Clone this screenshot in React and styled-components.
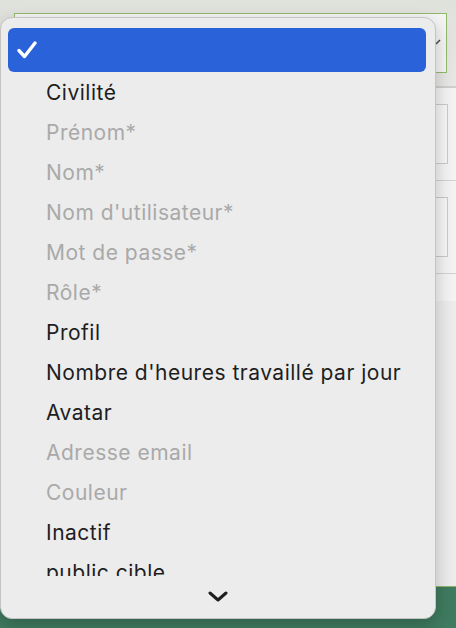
import React from 'react';
import styled, { createGlobalStyle } from 'styled-components';

const GlobalStyle = createGlobalStyle`
  html, body { margin: 0; padding: 0; }
  body {
    font-family: Inter, "Noto Sans", "Liberation Sans", sans-serif;
    background: #e4e5e1;
  }
`;

const items = [
  { label: 'Civilité' },
  { label: 'Prénom*', disabled: true },
  { label: 'Nom*', disabled: true },
  { label: "Nom d'utilisateur*", disabled: true },
  { label: 'Mot de passe*', disabled: true },
  { label: 'Rôle*', disabled: true },
  { label: 'Profil' },
  { label: "Nombre d'heures travaillé par jour" },
  { label: 'Avatar' },
  { label: 'Adresse email', disabled: true },
  { label: 'Couleur', disabled: true },
  { label: 'Inactif' },
  { label: 'public cible' },
];

export default function App() {
  return (
    <>
      <GlobalStyle />
      <Page>
        <Header>
          <SelectField>
            <SelectArrow viewBox="0 0 10 10">
              <polyline points="2,7 6,3" />
            </SelectArrow>
          </SelectField>
        </Header>
        <FormPanel>
          <FormRow><InputBox /></FormRow>
          <FormRow><InputBox /></FormRow>
        </FormPanel>
        <Backdrop />
        <Footer />

        <Menu>
          <MenuList>
            <SelectedItem>
              <CheckIcon viewBox="0 0 20 18">
                <polyline points="2,9.5 7.5,15.5 18,2" />
              </CheckIcon>
            </SelectedItem>
            {items.map((item) => (
              <MenuItem key={item.label} $disabled={item.disabled}>
                {item.label}
              </MenuItem>
            ))}
          </MenuList>
          <ScrollHint>
            <Chevron viewBox="0 0 20 11">
              <polyline points="2,2 10,9 18,2" />
            </Chevron>
          </ScrollHint>
        </Menu>
      </Page>
    </>
  );
}

const Page = styled.div`
  position: relative;
  height: 628px;
  overflow: hidden;
  display: flex;
  flex-direction: column;
`;

const Header = styled.div`
  height: 88px;
  box-sizing: border-box;
  padding: 13px 9px 0 14px;
  background: linear-gradient(#dfe1db, #e7e7e5);
  border-bottom: 2px solid #cfcfcf;
`;

const SelectField = styled.div`
  position: relative;
  height: 60px;
  box-sizing: border-box;
  border: 1px solid #94b96b;
  background: #f5f5f5;
`;

const SelectArrow = styled.svg`
  position: absolute;
  right: 2px;
  top: 23px;
  width: 10px;
  height: 10px;
  fill: none;
  stroke: #444;
  stroke-width: 1.5;
`;

const FormPanel = styled.div`
  background: #f3f3f3;
  height: 213px;
  box-shadow: 0 2px 3px rgba(0, 0, 0, 0.12);
`;

const FormRow = styled.div`
  height: 93px;
  box-sizing: border-box;
  padding: 16px 8px 16px 200px;
  border-bottom: 1px solid #d2d2d2;
`;

const InputBox = styled.div`
  height: 60px;
  box-sizing: border-box;
  border: 1px solid #c9c9c9;
  background: #f6f6f6;
`;

const Backdrop = styled.div`
  flex: 1;
  background: linear-gradient(90deg, #e2e2e2, #ececec);
`;

const Footer = styled.div`
  height: 41px;
  background: #3f7b5f;
  border-top: 1px solid #8fb36a;
`;

const Menu = styled.div`
  position: absolute;
  left: 0;
  top: 17px;
  width: 436px;
  height: 602px;
  box-sizing: border-box;
  background: #ececec;
  border: 1px solid #c4c4c4;
  border-radius: 12px;
  box-shadow: 0 6px 18px rgba(0, 0, 0, 0.22);
  padding-top: 10px;
  display: flex;
  flex-direction: column;
  overflow: hidden;
`;

const MenuList = styled.div`
  height: 548px;
  overflow: hidden;
`;

const SelectedItem = styled.div`
  margin: 0 9px 0 7px;
  height: 44px;
  border-radius: 6px;
  background: #2962d9;
  display: flex;
  align-items: center;
  padding-left: 9px;
`;

const CheckIcon = styled.svg`
  width: 20px;
  height: 18px;
  fill: none;
  stroke: #fff;
  stroke-width: 3.4;
  stroke-linecap: round;
  stroke-linejoin: round;
`;

const MenuItem = styled.div`
  height: 40px;
  display: flex;
  align-items: center;
  padding-left: 45px;
  font-size: 21px;
  letter-spacing: 0.5px;
  color: ${(p) => (p.$disabled ? '#a9a9a9' : '#1e1e1e')};
  white-space: nowrap;
`;

const ScrollHint = styled.div`
  flex: 1;
  display: flex;
  align-items: center;
  justify-content: center;
  padding-bottom: 2px;
`;

const Chevron = styled.svg`
  width: 20px;
  height: 11px;
  fill: none;
  stroke: #1e1e1e;
  stroke-width: 3;
  stroke-linecap: round;
  stroke-linejoin: round;
`;
